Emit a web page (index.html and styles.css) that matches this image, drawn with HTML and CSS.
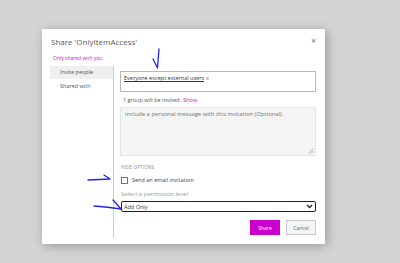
FILE: index.html
```html
<!DOCTYPE html>
<html lang="en">
<head>
    <meta charset="UTF-8">
    <title>Share 'OnlyItemAccess'</title>
    <link rel="stylesheet" href="styles.css">
</head>
<body>
    <div class="dialog">
        <!-- Header -->
        <div class="dialog-header">
            <h2>Share 'OnlyItemAccess'</h2>
            <span class="close">&#x2715;</span>
        </div>
        <div class="shared-note">Only shared with you</div>

        <div class="dialog-body">
            <!-- Side nav -->
            <ul class="side-nav">
                <li class="active">Invite people</li>
                <li>Shared with</li>
            </ul>

            <!-- Main form -->
            <div class="form">
                <div class="people-picker">
                    <span class="person">Everyone except external users</span><span class="remove">x</span>
                </div>
                <p class="invite-count">1 group will be invited. <a href="#">Show</a></p>
                <div class="message">
                    <span>Include a personal message with this invitation (Optional).</span>
                    <svg class="grip" width="6" height="6" viewBox="0 0 6 6">
                        <path d="M5.5 0.5 L0.5 5.5 M5.5 3 L3 5.5" stroke="#999" stroke-width="0.8"/>
                    </svg>
                </div>
                <div class="hide-options">HIDE OPTIONS</div>
                <label class="check-row">
                    <span class="checkbox"></span>
                    Send an email invitation
                </label>
                <div class="perm-label">Select a permission level</div>
                <div class="select">
                    <span>Add Only</span>
                    <svg width="7" height="5" viewBox="0 0 7 5">
                        <path d="M1 1 L3.5 3.5 L6 1" fill="none" stroke="#222" stroke-width="1.3"/>
                    </svg>
                </div>
                <div class="actions">
                    <button class="btn primary">Share</button>
                    <button class="btn">Cancel</button>
                </div>
            </div>
        </div>
    </div>

    <!-- Hand drawn annotations -->
    <svg class="marks" width="400" height="263" viewBox="0 0 400 263">
        <g fill="none" stroke="#2222ee" stroke-width="1.3" stroke-linecap="round" stroke-linejoin="round">
            <path d="M153 59 L157.5 68 L159 49"/>
            <path d="M88 180 L110 179 M104 175 L110 179"/>
            <path d="M94 206 Q108 207 121 209 M113 200 L121 209"/>
        </g>
    </svg>
</body>
</html>
```

FILE: styles.css
```css
body {
    margin: 0;
    padding: 29px 0 0 42px;
    background-color: #d4d4d4;
    font-family: 'Open Sans', 'Liberation Sans', sans-serif;
    color: #444;
    height: 263px;
    box-sizing: border-box;
    overflow: hidden;
}

.dialog {
    width: 283px;
    height: 215px;
    background-color: #ffffff;
    box-shadow: 2px 2px 10px rgba(0, 0, 0, 0.28);
    display: flex;
    flex-direction: column;
}

.dialog-header {
    display: flex;
    justify-content: space-between;
    align-items: flex-start;
    padding: 6px 9px 0 9px;
}

.dialog-header h2 {
    margin: 0;
    font-size: 8px;
    line-height: 13px;
    font-weight: 400;
    color: #5a5a5a;
}

.close {
    font-size: 6px;
    line-height: 8px;
    margin-top: 2px;
    color: #888;
    font-weight: 700;
}

.shared-note {
    font-size: 5px;
    line-height: 8px;
    color: #c010c8;
    padding: 6px 0 0 11px;
}

.dialog-body {
    display: flex;
    flex: 1;
    margin-top: 4px;
    padding-bottom: 6px;
}

.side-nav {
    list-style: none;
    margin: 0 0 0 8px;
    padding: 0;
    width: 63px;
    border-right: 1px solid #cfcfcf;
}

.side-nav li {
    font-size: 5.5px;
    line-height: 13px;
    padding-left: 10px;
    color: #555;
}

.side-nav li.active {
    background-color: #efefef;
}

.side-nav li + li {
    margin-top: 1px;
}

.form {
    flex: 1;
    padding: 5px 9px 0 6px;
    display: flex;
    flex-direction: column;
}

.people-picker {
    height: 21px;
    border: 1px solid #b8b8b8;
    box-sizing: border-box;
    padding: 2px 3px;
    font-size: 5.5px;
    line-height: 9px;
}

.person {
    color: #333;
    text-decoration: underline;
}

.remove {
    color: #c010c8;
    margin-left: 2px;
}

.invite-count {
    margin: 3px 0 0 3px;
    font-size: 5.5px;
    line-height: 10px;
    color: #555;
}

.invite-count a {
    color: #c010c8;
    text-decoration: none;
    margin-left: 1px;
}

.message {
    position: relative;
    height: 49px;
    margin-top: 2px;
    box-sizing: border-box;
    background-color: #f4f4f4;
    border: 1px solid #e6e6e6;
    padding: 2px 4px;
    font-size: 5.9px;
    line-height: 9px;
    color: #777;
}

.grip {
    position: absolute;
    right: 1px;
    bottom: 1px;
}

.hide-options {
    margin: 8px 0 0 1px;
    font-size: 4.5px;
    line-height: 7px;
    letter-spacing: 0.2px;
    color: #888;
}

.check-row {
    display: flex;
    align-items: center;
    gap: 4px;
    margin: 5px 0 0 1px;
    font-size: 5.5px;
    line-height: 9px;
    color: #444;
}

.checkbox {
    width: 5px;
    height: 5px;
    border: 1px solid #777;
    background-color: #fff;
}

.perm-label {
    margin: 4px 0 0 1px;
    font-size: 5.9px;
    line-height: 10px;
    color: #999;
}

.select {
    display: flex;
    justify-content: space-between;
    align-items: center;
    height: 9px;
    margin: 2px 0 0 1px;
    padding: 0 2px 0 2px;
    border: 1.5px solid #222;
    border-radius: 2px;
    font-size: 5.5px;
    line-height: 8px;
    color: #333;
}

.actions {
    display: flex;
    justify-content: flex-end;
    gap: 6px;
    margin-top: 8px;
}

.btn {
    height: 15px;
    width: 30px;
    padding: 0;
    font-family: inherit;
    font-size: 5px;
    border: 1px solid #c8c8c8;
    background-color: #f4f4f4;
    color: #666;
}

.btn.primary {
    background-color: #cc00cc;
    border-color: #cc00cc;
    color: #ffffff;
}

.marks {
    position: absolute;
    left: 0;
    top: 0;
    pointer-events: none;
}
```
